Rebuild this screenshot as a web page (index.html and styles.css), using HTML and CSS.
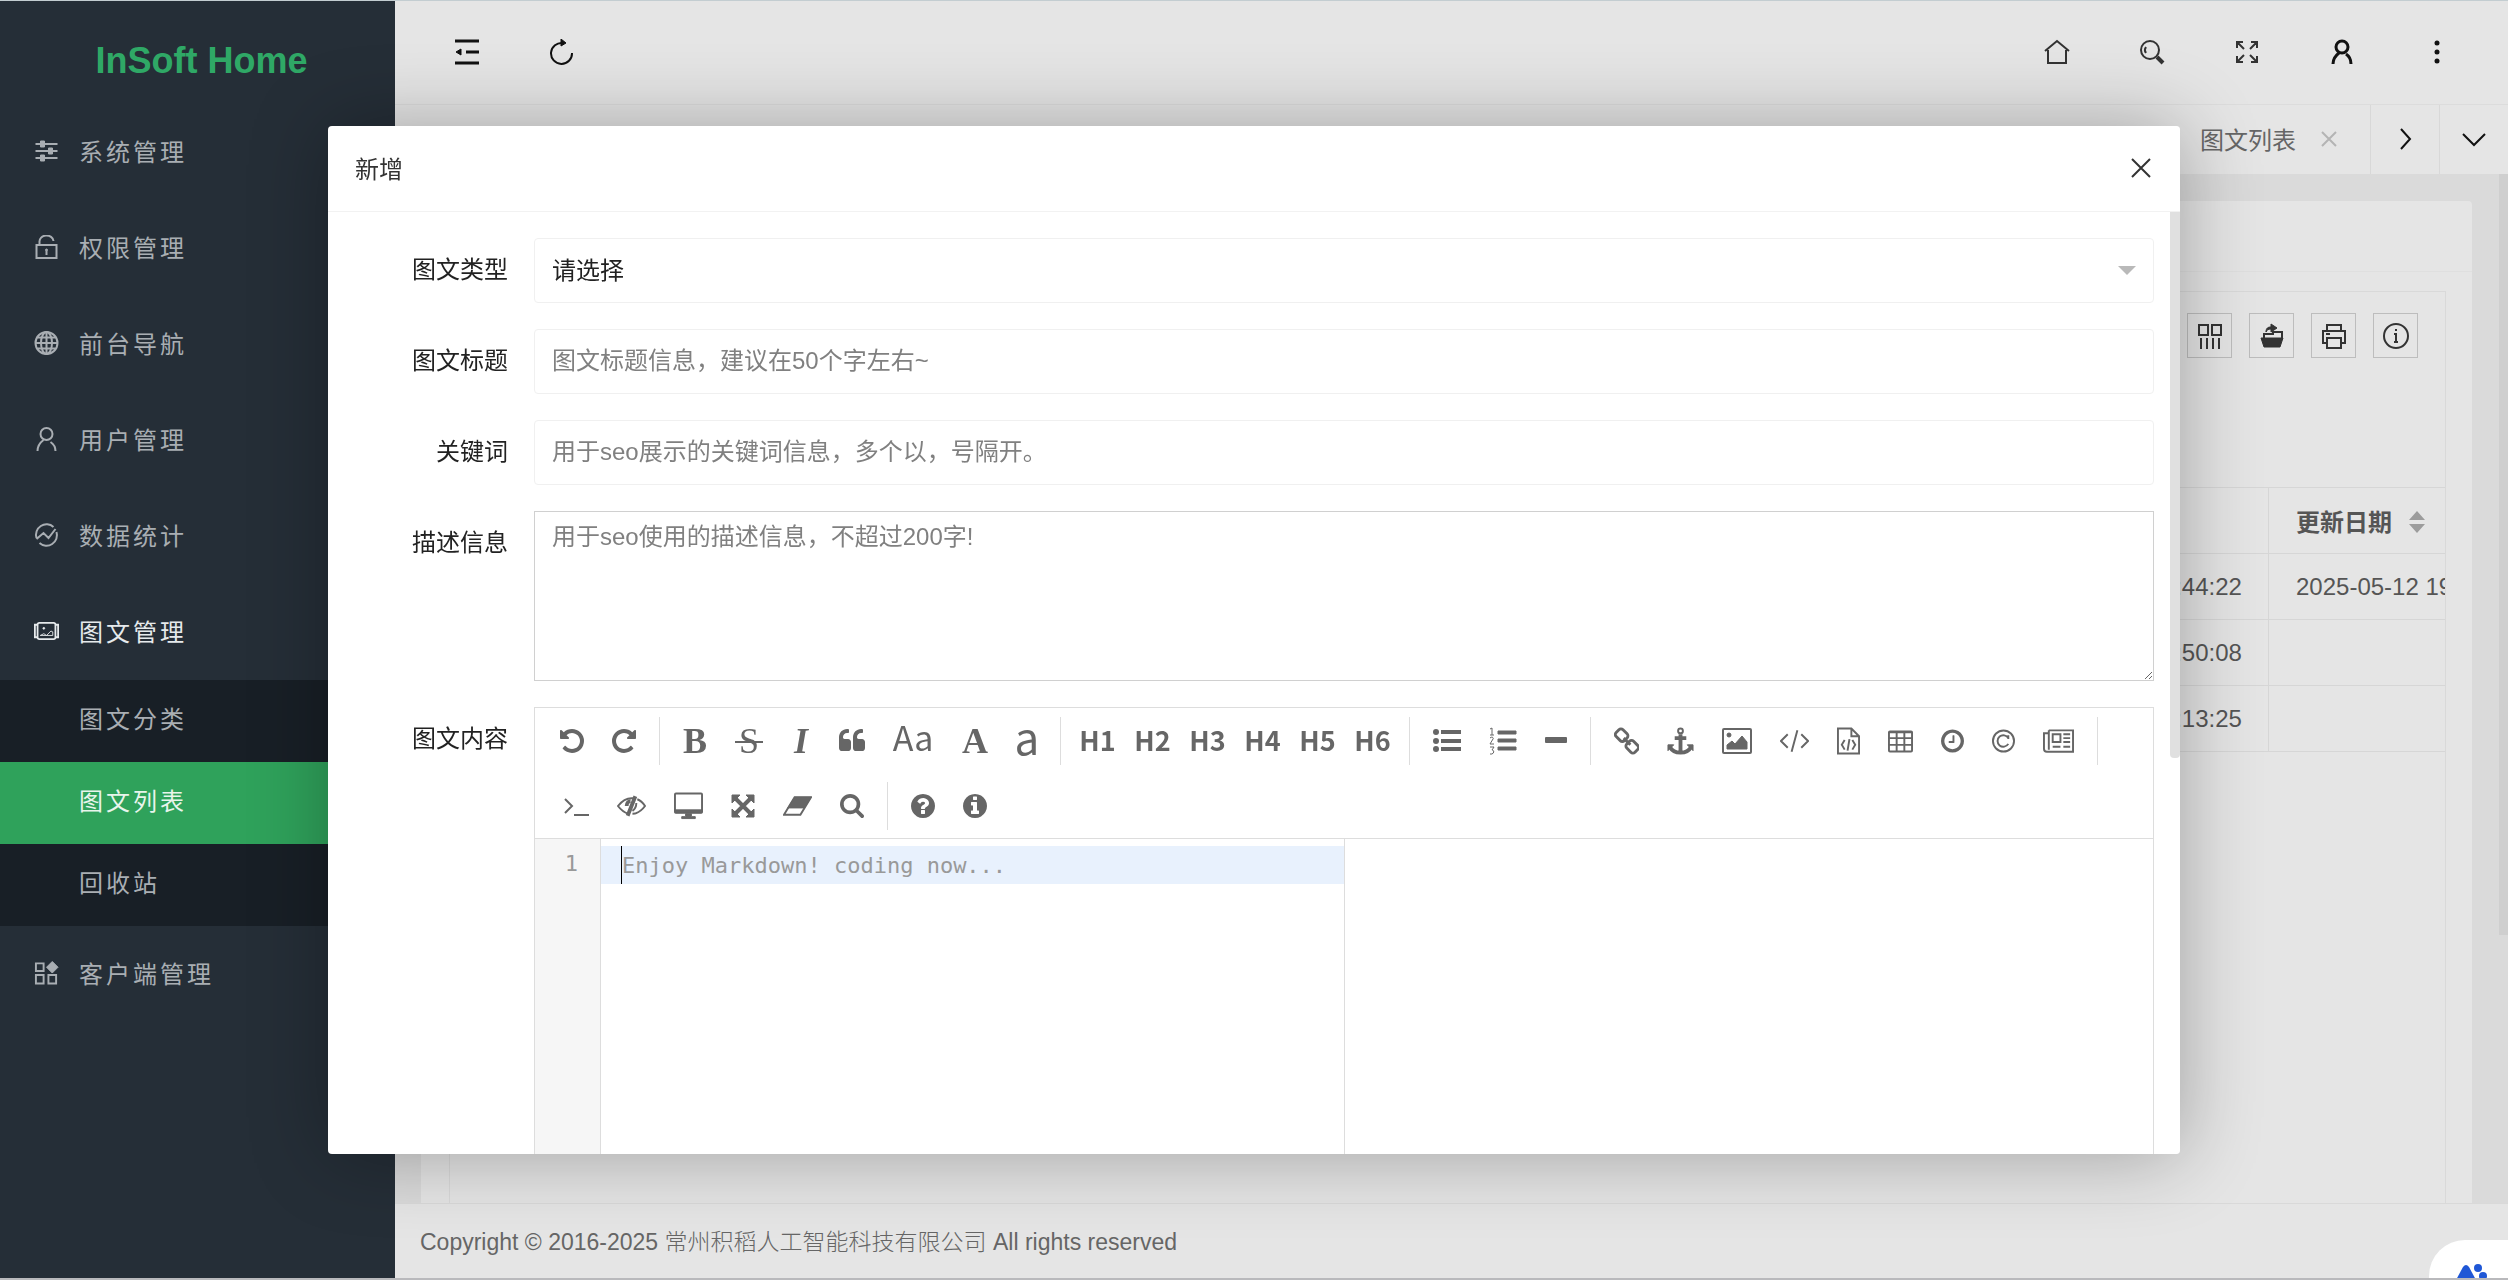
FILE: index.html
```html
<!DOCTYPE html>
<html lang="zh-CN">
<head>
<meta charset="utf-8">
<title>InSoft Home</title>
<link rel="stylesheet" href="styles.css">
</head>
<body>
<svg class="sprite" aria-hidden="true">
  <symbol id="undo" viewBox="128 128 1536 1536"><path d="M1664 896q0 156-61 298t-164 245-245 164-298 61q-172 0-327-72.500t-264-204.500q-7-10-6.500-22.500t8.500-20.500l137-138q10-9 25-9 16 2 23 12 73 95 179 147t225 52q104 0 198.500-40.500t163.500-109.500 109.500-163.500 40.500-198.500-40.500-198.500-109.500-163.500-163.500-109.500-198.500-40.500q-98 0-188 35.500t-160 101.500l137 138q31 30 14 69-17 40-59 40h-448q-26 0-45-19t-19-45v-448q0-42 40-59 39-17 69 14l130 129q107-101 244.500-156.500t284.500-55.500q156 0 298 61t245 164 164 245 61 298z"/></symbol>
  <symbol id="quote" viewBox="64 256 1664 1280"><path d="M832 960v384q0 80-56 136t-136 56h-384q-80 0-136-56t-56-136v-704q0-104 40.500-198.500t109.500-163.500 163.500-109.500 198.500-40.500h64q26 0 45 19t19 45v128q0 26-19 45t-45 19h-64q-106 0-181 75t-75 181v32q0 40 28 68t68 28h224q80 0 136 56t56 136zm896 0v384q0 80-56 136t-136 56h-384q-80 0-136-56t-56-136v-704q0-104 40.500-198.500t109.500-163.500 163.500-109.500 198.500-40.500h64q26 0 45 19t19 45v128q0 26-19 45t-45 19h-64q-106 0-181 75t-75 181v32q0 40 28 68t68 28h224q80 0 136 56t56 136z"/></symbol>
  <symbol id="search" viewBox="64 128 1664 1664"><path d="M1216 832q0-185-131.500-316.500t-316.500-131.500-316.500 131.500-131.500 316.500 131.500 316.500 316.500 131.500 316.500-131.500 131.500-316.500zm512 832q0 52-38 90t-90 38q-54 0-90-38l-343-342q-179 124-399 124-143 0-273.500-55.500t-225-150-150-225-55.500-273.500 55.500-273.500 150-225 225-150 273.500-55.500 273.500 55.500 225 150 150 225 55.500 273.500q0 220-124 399l343 343q37 37 37 90z"/></symbol>
  <symbol id="question" viewBox="128 128 1536 1536"><path d="M1024 1376v-192q0-14-9-23t-23-9h-192q-14 0-23 9t-9 23v192q0 14 9 23t23 9h192q14 0 23-9t9-23zm256-672q0-88-55.500-163t-138.500-116-170-41q-243 0-371 213-15 24 8 42l132 100q7 6 19 6 16 0 25-12 53-68 86-92 34-24 86-24 48 0 85.500 26t37.500 59q0 38-20 61t-68 45q-63 28-115.500 86.500t-52.500 125.500v36q0 14 9 23t23 9h192q14 0 23-9t9-23q0-19 21.500-49.500t54.500-49.500q32-18 49-28.500t46-35 44.500-48 28-60.500 12.500-81zm384 192q0 209-103 385.500t-279.500 279.500-385.500 103-385.500-103-279.500-279.500-103-385.500 103-385.500 279.500-279.500 385.500-103 385.500 103 279.500 279.500 103 385.500z"/></symbol>
  <symbol id="info" viewBox="128 128 1536 1536"><path d="M1152 1376v-160q0-14-9-23t-23-9h-96v-512q0-14-9-23t-23-9h-320q-14 0-23 9t-9 23v160q0 14 9 23t23 9h96v320h-96q-14 0-23 9t-9 23v160q0 14 9 23t23 9h448q14 0 23-9t9-23zm-128-896v-160q0-14-9-23t-23-9h-192q-14 0-23 9t-9 23v160q0 14 9 23t23 9h192q14 0 23-9t9-23zm640 416q0 209-103 385.500t-279.500 279.500-385.500 103-385.500-103-279.500-279.500-103-385.500 103-385.500 279.500-279.500 385.500-103 385.500 103 279.500 279.500 103 385.500z"/></symbol>
  <symbol id="clock" viewBox="128 128 1536 1536"><path d="M1024 544v448q0 14-9 23t-23 9h-320q-14 0-23-9t-9-23v-64q0-14 9-23t23-9h224v-352q0-14 9-23t23-9h64q14 0 23 9t9 23zm416 352q0-148-73-273t-198-198-273-73-273 73-198 198-73 273 73 273 198 198 273 73 273-73 198-198 73-273zm224 0q0 209-103 385.500t-279.500 279.500-385.500 103-385.500-103-279.500-279.500-103-385.500 103-385.500 279.500-279.500 385.500-103 385.500 103 279.500 279.500 103 385.500z"/></symbol>
</svg>

<div class="app">
  <aside class="sidebar">
    <a class="logo" href="#">InSoft Home</a>
    <nav class="menu">
      <a class="item" href="#"><svg class="line" viewBox="0 0 24 24"><path d="M1 5h22M1 12h22M1 19h22"/><path class="fill" d="M6 2h4v6H6zM14 9h4v6h-4zM6 16h4v6H6z"/></svg>系统管理</a>
      <a class="item" href="#"><svg class="line" viewBox="0 0 24 24"><path d="M2 10h20v13H2zM5 10V7a7 6 0 0 1 14-1M12 16v4"/><circle class="fill" cx="12" cy="15" r="1"/></svg>权限管理</a>
      <a class="item" href="#"><svg class="line" viewBox="0 0 24 24"><circle cx="12" cy="12" r="11"/><ellipse cx="12" cy="12" rx="5.500" ry="11"/><path d="M12 1v22M1 12h22M3 6.500h18M3 17.500h18"/></svg>前台导航</a>
      <a class="item" href="#"><svg class="line" viewBox="0 0 24 24"><circle cx="12" cy="7" r="6"/><path d="M3 24c0-5 2-8 6-11M16 15c3 2 5 5 5 9"/></svg>用户管理</a>
      <a class="item" href="#"><svg class="line" viewBox="0 0 24 24"><path d="M19 4A10.500 10.500 0 0 0 2 15M5 20a10.500 10.500 0 0 0 17-11M2 16l7-6 5 5 7-9"/></svg>数据统计</a>
      <a class="item open" href="#"><svg class="line" viewBox="0 0 28 24"><rect x="4" y="3" width="20" height="18" rx="2"/><path d="M4 5H1v14h3M24 5h3v14h-3"/><path class="thin" d="M7 17l4-2 3 2 5-5 2 1v4z"/><circle class="fill" cx="11" cy="9" r="1"/></svg>图文管理</a>
      <div class="submenu">
        <a href="#">图文分类</a>
        <a class="current" href="#">图文列表</a>
        <a href="#">回收站</a>
      </div>
      <a class="item" href="#"><svg class="line" viewBox="0 0 26 24"><path d="M2 2h8v8H2zM2 14h8v9H2zM15 14h8v9h-8z"/><path class="fill" d="M19 0l6 6-6 6-6-6z"/></svg>客户端管理</a>
    </nav>
  </aside>

  <div class="main">
    <header class="topbar">
      <div class="group">
        <button aria-label="收起菜单"><svg class="line thick" viewBox="0 0 26 26"><path d="M1 2h24M12 13h13M1 24h24"/><path class="fill" d="M7 10v6l-5-3z"/></svg></button>
        <button aria-label="刷新"><svg class="line" viewBox="0 0 26 26"><path d="M14 4A10.500 10.500 0 1 0 23 14"/><path class="fill" d="M12 0l5 4-5 3z"/></svg></button>
      </div>
      <div class="group">
        <button aria-label="主页"><svg class="line soft" viewBox="0 0 26 26"><path d="M1 12L13 2l12 10M4 11v13h18V11"/></svg></button>
        <button aria-label="搜索"><svg class="line soft" viewBox="0 0 26 26"><circle cx="11" cy="11" r="9"/><path d="M7 14a5 5 0 0 1 0-6"/><path class="heavy" d="M18 18l6 6"/></svg></button>
        <button aria-label="全屏"><svg class="line soft" viewBox="0 0 26 26"><path d="M3 9V3h6M3 3l7 7M17 3h6v6M23 3l-7 7M3 17v6h6M3 23l7-7M17 23h6v-6M23 23l-7-7"/></svg></button>
        <button aria-label="用户"><svg class="line dark" viewBox="0 0 26 26"><circle cx="13" cy="8" r="6"/><path d="M4 25c0-5 2-8 6-11M17 15c3 2 5 5 5 10"/></svg></button>
        <button aria-label="更多"><svg viewBox="0 0 26 26"><circle cx="13" cy="4" r="2.500"/><circle cx="13" cy="13" r="2.500"/><circle cx="13" cy="22" r="2.500"/></svg></button>
      </div>
    </header>
    <div class="tabs">
      <a class="tab" href="#">图文列表 <svg class="line" viewBox="0 0 18 18"><path d="M2 2l14 14M16 2L2 16"/></svg></a>
      <button aria-label="下一个"><svg class="line dark" viewBox="0 0 26 26"><path d="M9 3l9 10-9 10"/></svg></button>
      <button aria-label="展开"><svg class="line dark" viewBox="0 0 26 26"><path d="M2 8l11 11L24 8"/></svg></button>
    </div>

    <main class="content">
      <section class="card">
        <div class="card-head"></div>
        <div class="view">
          <div class="tools">
            <button aria-label="筛选列"><svg class="line" viewBox="0 0 26 26"><path d="M2 2h9v10H2zM15 2h9v10h-9zM4 15v11M10 15v11M16 15v11M22 15v11"/></svg></button>
            <button aria-label="导出"><svg class="line soft" viewBox="0 0 26 26"><path class="fill" d="M2 15h22l-3 9H5zM12 1l6 4-6 4V6c-3 0-4 1-5 3 0-4 2-5 5-5z"/><path d="M5 15v-4h9V9h9v7"/></svg></button>
            <button aria-label="打印"><svg class="line soft" viewBox="0 0 26 26"><path d="M6 8V2h14v6M6 20H2V8h22v12h-4M6 15h14v10H6zM5 11h4"/></svg></button>
            <button aria-label="说明"><svg class="line soft" viewBox="0 0 26 26"><circle cx="13" cy="13" r="12"/><path d="M11 11h2v8M11 19h4M13 6v2"/></svg></button>
          </div>
          <table>
            <colgroup><col><col class="date"><col class="date"></colgroup>
            <thead><tr><th></th><th></th><th>更新日期 <svg class="sort" viewBox="0 0 16 22"><path d="M8 0l8 9H0zM8 22l8-9H0z"/></svg></th></tr></thead>
            <tbody>
              <tr><td></td><td>2025-05-12 18:44:22</td><td>2025-05-12 19:02:10</td></tr>
              <tr><td></td><td>2025-05-12 18:50:08</td><td></td></tr>
              <tr><td></td><td>2025-05-12 19:13:25</td><td></td></tr>
            </tbody>
          </table>
        </div>
      </section>
      <div class="page-scroll"></div>
    </main>
    <footer class="footer">Copyright © 2016-2025 <span>常州积稻人工智能科技有限公司</span> All rights reserved</footer>
  </div>
</div>

<div class="overlay">
  <div class="modal" role="dialog" aria-labelledby="dlg-title">
    <div class="modal-head">
      <span id="dlg-title">新增</span>
      <button aria-label="关闭"><svg class="line" viewBox="0 0 20 20"><path d="M1 1l18 18M19 1L1 19"/></svg></button>
    </div>
    <form class="form">
      <label for="type">图文类型</label>
      <div class="select-box"><select id="type"><option>请选择</option></select></div>
      <label for="title">图文标题</label>
      <input id="title" type="text" placeholder="图文标题信息，建议在50个字左右~">
      <label for="keywords">关键词</label>
      <input id="keywords" type="text" placeholder="用于seo展示的关键词信息，多个以，号隔开。">
      <label for="desc">描述信息</label>
      <textarea id="desc" placeholder="用于seo使用的描述信息，不超过200字!"></textarea>
      <label for="code">图文内容</label>
      <div class="editor">
        <div class="bar">
          <button type="button" aria-label="撤销"><svg class="w24"><use href="#undo"/></svg></button>
          <button type="button" aria-label="重做"><svg class="w24 flip"><use href="#undo"/></svg></button>
          <i class="sep"></i>
          <button type="button" class="serif w52"><b>B</b></button>
          <button type="button" class="serif w56" aria-label="删除线"><span class="strike">S</span></button>
          <button type="button" class="serif w48 italic">I</button>
          <button type="button" aria-label="引用"><svg class="w26" viewBox="0 0 26 26"><use href="#quote"/></svg></button>
          <button type="button" class="case w68">Aa</button>
          <button type="button" class="serif w56"><b>A</b></button>
          <button type="button" class="case large w48">a</button>
          <i class="sep"></i>
          <button type="button" class="head">H1</button>
          <button type="button" class="head">H2</button>
          <button type="button" class="head">H3</button>
          <button type="button" class="head">H4</button>
          <button type="button" class="head">H5</button>
          <button type="button" class="head">H6</button>
          <i class="sep"></i>
          <button type="button" aria-label="无序列表"><svg class="w28" viewBox="0 0 28 28"><path d="M8 3h20v4H8zM8 12h20v4H8zM8 20h20v4H8z"/><circle cx="3" cy="5" r="3"/><circle cx="3" cy="14" r="3"/><circle cx="3" cy="22" r="3"/></svg></button>
          <button type="button" aria-label="有序列表"><svg class="w28 line" viewBox="0 0 28 28"><path class="fill" d="M9 4h18v3H9zM9 12h18v3H9zM9 20h18v3H9z"/><path class="digits" d="M1 2l2-1v7M1 8h4M1 11c2-2 4 0 3 1l-3 5h4M1 20h4l-2 3c3 0 2 5-2 4"/></svg></button>
          <button type="button" aria-label="分割线"><svg class="w22" viewBox="0 0 22 28"><rect y="10" width="22" height="6" rx="1"/></svg></button>
          <i class="sep"></i>
          <button type="button" aria-label="链接"><svg class="w25 line" viewBox="0 0 26 28"><g class="ring"><rect x="1" y="-5" width="12" height="10" rx="3" transform="translate(3 3) rotate(45)"/><rect x="1" y="-5" width="12" height="10" rx="3" transform="translate(14 15) rotate(45)"/><path d="M10 11l7 7"/></g></svg></button>
          <button type="button" aria-label="锚点"><svg class="w27 line" viewBox="0 0 28 28"><circle cx="14" cy="3.500" r="2.500"/><path class="heavy" d="M14 7v18M8 11h12M3 20c2 4 6 6 11 6s9-2 11-6"/><path class="fill" d="M1 18h6l-6 6zM27 18h-6l6 6z"/></svg></button>
          <button type="button" aria-label="图片"><svg class="w30 line" viewBox="0 0 30 28"><rect x="1" y="2" width="28" height="24" rx="1"/><path class="fill" d="M5 22v-4l5-4 3 3 7-8 5 6v7z"/><circle class="fill" cx="7" cy="8" r="2"/></svg></button>
          <button type="button" aria-label="行内代码"><svg class="w29 line" viewBox="0 0 30 28"><path d="M8 7l-7 7 7 7M22 7l7 7-7 7M18 3l-6 22"/></svg></button>
          <button type="button" aria-label="代码块"><svg class="w23 line" viewBox="0 0 24 28"><path d="M1 1h14l8 8v18H1zM15 1v8h8M8 13l-3 5 3 5M16 13l3 5-3 5M13 12l-2 12"/></svg></button>
          <button type="button" aria-label="表格"><svg class="w25 line" viewBox="0 0 26 26"><rect x="1" y="3" width="24" height="21" rx="1"/><path d="M1 4h24M1 10h24M1 17h24M9 4v20M17 4v20"/></svg></button>
          <button type="button" aria-label="日期时间"><svg class="w23"><use href="#clock"/></svg></button>
          <button type="button" aria-label="版权符号"><svg class="w23 line" viewBox="0 0 24 24"><circle cx="12" cy="12" r="11"/><path d="M17 9a6 6 0 1 0 0 6M17 6v4"/></svg></button>
          <button type="button" aria-label="分页"><svg class="w31 line" viewBox="0 0 32 28"><path d="M6 3h25v22H4c-2 0-3-1-3-3V6h5M6 3v20"/><path d="M10 7h8v8h-8zM21 7h7M21 11h7M21 15h7M10 20h8M21 20h7"/></svg></button>
          <i class="sep"></i>
          <button type="button" aria-label="跳转到行"><svg class="w29 line" viewBox="0 0 29 28"><path d="M5 7l7 7-7 7M14 23h15"/></svg></button>
          <button type="button" aria-label="关闭预览"><svg class="w29 line" viewBox="0 0 30 28"><path d="M12 22C8 21 4 18 1 14c4-5 9-8 14-8h3M21 7c3 1 6 4 8 7-3 4-8 8-13 8"/><path class="heavy" d="M19 4l-8 20M10 14c0-3 2-5 4-5"/><path d="M20 11c0 4-1 6-4 8"/></svg></button>
          <button type="button" aria-label="全窗口预览"><svg class="w29 line" viewBox="0 0 30 28"><rect x="1" y="1" width="28" height="20" rx="1"/><path class="fill" d="M1 18h28v3H1zM12 22h6v3h4v2H8v-2h4z"/></svg></button>
          <button type="button" aria-label="全屏编辑"><svg class="w24 line" viewBox="0 0 24 24"><path class="heavy" d="M4 4l16 16M20 4L4 20"/><path class="fill" d="M1 1h8L1 9zM23 1h-8l8 8zM1 23h8l-8-8zM23 23h-8l8-8z"/></svg></button>
          <button type="button" aria-label="清空"><svg class="w29 line" viewBox="0 0 30 28"><path d="M12 5h17L18 23H1z"/><path class="fill" d="M12 5h17l-7 11H5z"/></svg></button>
          <button type="button" aria-label="搜索"><svg class="w24"><use href="#search"/></svg></button>
          <i class="sep"></i>
          <button type="button" aria-label="使用帮助"><svg class="w24"><use href="#question"/></svg></button>
          <button type="button" aria-label="关于"><svg class="w24"><use href="#info"/></svg></button>
        </div>
        <div class="panes">
          <div class="gutter">1</div>
          <div class="source"><input id="code" type="text" placeholder="Enjoy Markdown! coding now..."></div>
          <div class="preview"></div>
        </div>
      </div>
    </form>
    <div class="thumb"></div>
  </div>
</div>

<button class="chat" aria-label="智能助手"><svg viewBox="0 0 32 20"><path d="M0 20l7-13q3-4 6 0l7 13z"/><circle cx="22" cy="8" r="4"/><circle cx="27" cy="16" r="4"/></svg></button>
</body>
</html>
```
FILE: styles.css
```css
* { box-sizing: border-box; }

body {
  margin: 0;
  font-family: "Liberation Sans", "Noto Sans CJK SC", sans-serif;
  font-size: 24px;
  color: #333;
}

a { color: inherit; text-decoration: none; }
button { border: 0; background: none; padding: 0; font: inherit; color: inherit; }
svg { display: block; fill: currentColor; }
.sprite { position: absolute; width: 0; height: 0; }

.line { fill: none; stroke: currentColor; stroke-width: 2; }
.line .fill { fill: currentColor; stroke-width: 1; }
.line .heavy { stroke-width: 4; }
.line .ring { stroke-width: 3; }
.line .thin, .line .digits { stroke-width: 1; }
.thick, .dark { stroke-width: 3; }
.soft { color: #333; }

.app {
  display: flex;
  height: 100vh;
  border-top: 1px solid #c3cdd1;
  border-bottom: 2px solid #b9b9bc;
  background: #e5e5e5;
}

/* Sidebar */
.sidebar { flex: 0 0 395px; background: #252e37; color: #a9aeb3; }
.logo {
  display: block;
  height: 103px;
  padding: 16px 0 0 8px;
  line-height: 88px;
  text-align: center;
  font-size: 36px;
  font-weight: bold;
  color: #2fa866;
}
.menu { letter-spacing: 3px; }
.item { display: flex; align-items: center; gap: 20px; height: 96px; padding: 0 0 4px 34px; }
.item svg { width: 25px; height: 24px; margin-top: 2px; }
.open { color: #e6eaec; }
.submenu { background: #181f26; }
.submenu a { display: block; padding: 0 0 2px 79px; line-height: 80px; }
.submenu .current { background: #2fa25b; color: #e8f5ec; }

/* Main column */
.main { flex: 1; min-width: 0; display: flex; flex-direction: column; }
.topbar { display: flex; flex: none; justify-content: space-between; height: 104px; padding: 0 24px 2px; border-bottom: 1px solid #dcdcdc; color: #111; }
.group { display: flex; }
.group button { display: grid; place-items: center; width: 95px; }
.group svg { width: 26px; height: 26px; }

.tabs { display: flex; flex: none; justify-content: flex-end; height: 69px; color: #111; }
.tab { display: flex; align-items: center; gap: 24px; padding: 0 32px 3px 0; color: #666; }
.tab svg { width: 18px; height: 18px; margin-top: 2px; color: #b4b4b4; }
.tabs button { display: grid; place-items: center; width: 69px; padding-bottom: 2px; border-left: 1px solid #d8d8d8; }
.tabs button svg { width: 26px; height: 26px; stroke-width: 2; }

.content { position: relative; flex: 1; min-height: 0; overflow: hidden; padding: 27px 36px 0 26px; background: #dadada; }
.page-scroll { position: absolute; top: 0; right: 0; width: 9px; height: 74%; background: #cfcfcf; }
.card { height: 100%; background: #e5e5e5; border-radius: 4px 4px 0 0; padding: 0 26px 0 28px; }
.card-head { height: 71px; border-bottom: 1px solid #dfdfdf; margin: 0 -26px 19px -28px; }
.view { height: 100%; border: 1px solid #d9d9d9; overflow: hidden; }
.tools { display: flex; justify-content: flex-end; gap: 17px; height: 195px; padding: 21px 27px; }
.tools button { display: grid; place-items: center; width: 45px; height: 45px; border: 1px solid #bdbdbd; }
.tools svg { width: 26px; height: 26px; }

table { width: calc(100% + 101px); table-layout: fixed; border-collapse: collapse; color: #555; }
.date { width: 277px; }
th, td { height: 66px; padding: 0 26px 0 27px; border: 1px solid #d6d6d6; text-align: left; white-space: nowrap; }
.sort { display: inline-block; width: 16px; height: 22px; margin-left: 10px; vertical-align: -2px; color: #9c9c9c; }

.footer { flex: none; height: 75px; padding-left: 25px; line-height: 76px; font-size: 23px; color: #666; border-top: 1px solid #d9d9d9; }
.footer span { font-weight: 300; }

/* Dialog */
.overlay { position: fixed; inset: 0; padding: 126px 328px; }
.modal { position: relative; height: 100%; overflow: hidden; display: flex; flex-direction: column; background: #fff; border-radius: 4px; }
.overlay::before { content: ""; position: absolute; inset: 126px 328px; border-radius: 4px; box-shadow: 1px 1px 80px rgba(0, 0, 0, 0.3); }
.modal-head { display: flex; flex: none; align-items: center; justify-content: space-between; height: 86px; padding: 0 29px 2px 27px; border-bottom: 1px solid #f2f2f2; }
.modal-head svg { width: 20px; height: 20px; }
.thumb { position: absolute; top: 86px; right: 0; width: 10px; height: 546px; background: #e0e0e0; border-radius: 0 0 4px 4px; }

.form { display: grid; grid-template-columns: 180px 1fr; gap: 26px; padding: 26px 26px 26px 0; }
.form label { text-align: right; line-height: 64px; height: 65px; color: #222; }
.form > input, select, textarea {
  width: 100%;
  height: 65px;
  padding: 0 17px 2px;
  border: 1px solid #f0f0f0;
  border-radius: 4px;
  background: #fff;
  font: inherit;
  color: #222;
}
.select-box { position: relative; }
select { appearance: none; padding-bottom: 0; }
.select-box::after { content: ""; position: absolute; right: 18px; top: 28px; border: 9px solid transparent; border-top-color: #b9b9b9; border-bottom: 0; }
textarea { display: block; height: 170px; padding: 8px 17px; line-height: 34px; border-color: #d0d0d0; border-radius: 0; }
::placeholder { color: #808080; }

/* Markdown editor */
.editor { min-width: 0; border: 1px solid #ddd; }
.bar { display: flex; flex-wrap: wrap; padding-left: 11px; border-bottom: 1px solid #ddd; color: #666; }
.bar button { display: grid; place-items: center; height: 65px; padding: 0 14px; }
.bar svg { height: 28px; }
.sep { width: 1px; height: 48px; margin: 9px 9px 0; background: #ddd; }
.flip { transform: scaleX(-1); }
.w22 { width: 22px; }
.w23 { width: 23px; }
.w24 { width: 24px; }
.w25 { width: 25px; }
.w26 { width: 26px; }
.w27 { width: 27px; }
.w28 { width: 28px; }
.w29 { width: 29px; }
.w30 { width: 30px; }
.w31 { width: 31px; }
.bar .w48 { width: 48px; padding: 0; }
.bar .w52 { width: 52px; padding: 0; }
.bar .w56 { width: 56px; padding: 0; }
.bar .w68 { width: 68px; padding: 0; }
.bar .serif { font: 36px/64px "Liberation Serif", serif; }
.bar .italic { font-style: italic; font-weight: bold; }
.strike { padding: 0 4px; background: linear-gradient(currentColor, currentColor) center 55% / 100% 2px no-repeat; line-height: 40px; }
.bar .case { font: 34px/56px "Noto Sans CJK SC", sans-serif; padding-bottom: 8px; }
.bar .large { font-size: 44px; padding-bottom: 14px; }
.bar .head { width: 55px; padding: 0; font: bold 27px/63px "Noto Sans CJK SC", sans-serif; padding-bottom: 2px; }

.panes { display: grid; grid-template-columns: 66px 744px 1fr; height: 700px; font-family: "DejaVu Sans Mono", monospace; font-size: 22px; }
.gutter { padding: 7px 22px; line-height: 36px; text-align: right; color: #999; background: #f6f6f6; border-right: 1px solid #ddd; }
.source { position: relative; padding-top: 7px; border-right: 1px solid #ddd; }
.source::before { content: ""; position: absolute; left: 20px; top: 7px; width: 1px; height: 38px; background: #000; }
.source input { display: block; width: 100%; height: 38px; padding: 0 21px; border: 0; background: #e8f1fd; font: inherit; outline: 0; }
.source input::placeholder { color: #999; }

/* Assistant bubble */
.chat { position: fixed; right: 0; bottom: 2px; width: 79px; height: 38px; overflow: hidden; background: #fff; border-radius: 36px 0 0 0; color: #1f57d6; }
.chat svg { width: 32px; height: 20px; margin: 20px 0 0 27px; }
```
